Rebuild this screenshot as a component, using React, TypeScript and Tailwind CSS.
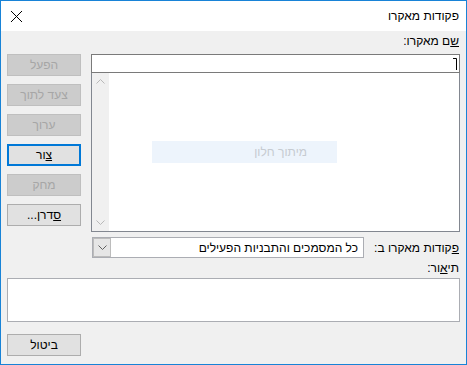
import type { ReactNode } from "react";

const FONT = "font-['Liberation_Sans','DejaVu_Sans',sans-serif]";

function SideButton({
  children,
  disabled,
  isDefault,
}: {
  children: ReactNode;
  disabled?: boolean;
  isDefault?: boolean;
}) {
  let cls = "border border-[#adadad] bg-[#e1e1e1] text-black";
  if (disabled) cls = "border border-[#bfbfbf] bg-[#cccccc] text-[#a6a6a6]";
  if (isDefault) cls = "border-2 border-[#0078d7] bg-[#e1e1e1] text-black";
  return (
    <div
      dir="rtl"
      className={`flex h-[22px] w-[74px] items-center justify-center text-[12px] leading-none ${cls}`}
    >
      {children}
    </div>
  );
}

function Chevron({ up, color = "#b9b9b9" }: { up?: boolean; color?: string }) {
  return (
    <svg width="9" height="5" viewBox="0 0 9 5">
      <path
        d={up ? "M0.5 4.5 L4.5 0.5 L8.5 4.5" : "M0.5 0.5 L4.5 4.5 L8.5 0.5"}
        fill="none"
        stroke={color}
        strokeWidth="1"
      />
    </svg>
  );
}

export default function App() {
  return (
    <div
      className={`flex h-[365px] w-[467px] flex-col border border-[#1883d7] ${FONT} text-[12px] text-black`}
    >
      {/* title bar */}
      <div className="flex h-[30px] items-center justify-between bg-white pl-[9px] pr-[7px]">
        <svg width="13" height="13" viewBox="0 0 13 13">
          <path d="M1 1 L12 12 M12 1 L1 12" stroke="#000" strokeWidth="1" />
        </svg>
        <span dir="rtl" className="text-[12px]">
          פקודות מאקרו
        </span>
      </div>

      {/* body */}
      <div className="flex flex-1 flex-col bg-[#f0f0f0] px-[6px] pb-[8px]">
        <div className="flex gap-[10px]">
          <div className="flex w-[74px] flex-col gap-[8px] pt-[23px]">
            <SideButton disabled>הפעל</SideButton>
            <SideButton disabled>צעד לתוך</SideButton>
            <SideButton disabled>ערוך</SideButton>
            <SideButton isDefault>
              <span>
                <span className="underline">צ</span>ור
              </span>
            </SideButton>
            <SideButton disabled>מחק</SideButton>
            <SideButton>
              <span>
                <span className="underline">ס</span>דרן...
              </span>
            </SideButton>
          </div>

          <div className="flex flex-1 flex-col">
            <div dir="rtl" className="flex h-[23px] items-end pb-[4px] pr-[1px]">
              <span>
                <span className="underline">ש</span>ם מאקרו:
              </span>
            </div>
            <div className="flex h-[19px] items-center justify-end border border-[#7a7a7a] bg-white pr-[2px]">
              <svg width="4" height="12" viewBox="0 0 4 12">
                <path d="M0 0.5 H3.5 V12" fill="none" stroke="#000" strokeWidth="1" />
              </svg>
            </div>
            <div className="flex h-[159px] border border-t-0 border-[#828790] bg-white">
              <div className="flex w-[17px] flex-col items-center justify-between bg-[#f0f0f0] py-[6px]">
                <Chevron up />
                <Chevron />
              </div>
              <div className="flex flex-1 flex-col pl-[43px] pt-[68px]">
                <div
                  dir="rtl"
                  className="flex h-[22px] w-[185px] items-center bg-[#edf4fc] pr-[30px] text-[#c6cbd1]"
                >
                  מיתוך חלון
                </div>
              </div>
            </div>

            <div className="mt-[5px] flex h-[21px] items-center">
              <div className="ml-[1px] flex h-[21px] w-[272px] border border-[#abadb3] bg-white">
                <div className="flex w-[18px] items-center justify-center border border-[#bcbcbc] bg-[#e6e6e6]">
                  <Chevron color="#606060" />
                </div>
                <div dir="rtl" className="flex flex-1 items-center pr-[5px]">
                  כל המסמכים והתבניות הפעילים
                </div>
              </div>
              <div dir="rtl" className="flex flex-1 pr-[1px]">
                <span>
                  <span className="underline">פ</span>קודות מאקרו ב:
                </span>
              </div>
            </div>
          </div>
        </div>

        <div dir="rtl" className="flex h-[20px] items-center pr-[1px]">
          <span>
            תי<span className="underline">א</span>ור:
          </span>
        </div>
        <div className="h-[44px] border border-[#abadb3] bg-white" />
        <div className="mt-[12px] flex">
          <SideButton>ביטול</SideButton>
        </div>
      </div>
    </div>
  );
}
